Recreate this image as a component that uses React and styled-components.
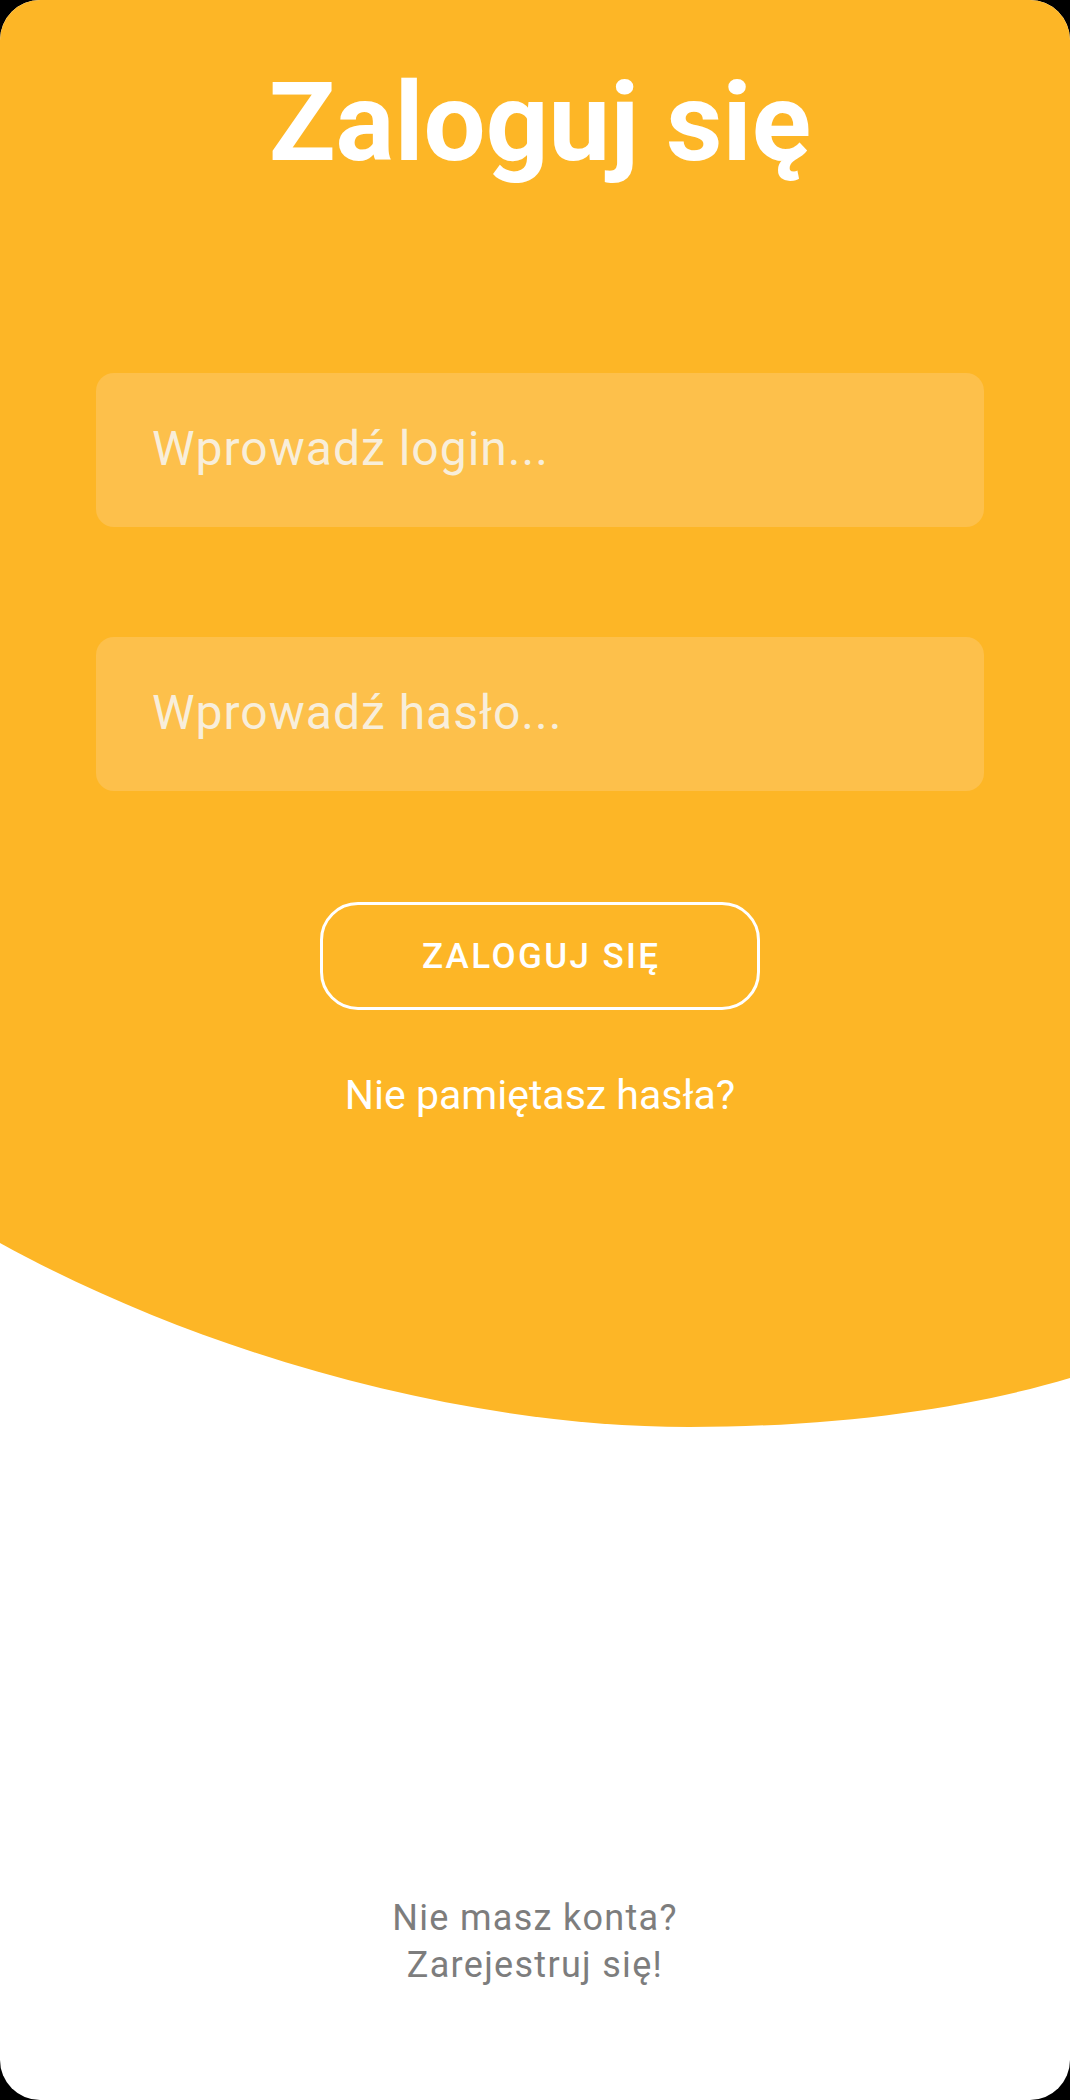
import styled, { createGlobalStyle } from "styled-components";

const GlobalStyle = createGlobalStyle`
* { box-sizing: border-box; }
html, body {
  margin: 0;
  padding: 0;
  background: #000000;
}
body {
  font-family: Roboto, "Noto Sans", "Liberation Sans", sans-serif;
}
`;

const Screen = styled.div`
width: 1070px;
height: 2100px;
background: #ffffff;
border-radius: 40px;
overflow: hidden;
display: flex;
flex-direction: column;
`;

const Header = styled.div`
background: #FDB626;
display: flex;
flex-direction: column;
align-items: center;
padding: 57px 86px 0 96px;
height: 1243px;
`;

const Title = styled.h1`
margin: 0;
font-size: 110px;
line-height: 1.2;
font-weight: 700;
color: #ffffff;
`;

const Form = styled.form`
width: 100%;
display: flex;
flex-direction: column;
align-items: center;
margin-top: 184px;
gap: 110px;
`;

const Field = styled.input`
width: 100%;
height: 154px;
border: none;
outline: none;
border-radius: 18px;
background: #FDC04B;
padding: 0 0 4px 56px;
font-family: inherit;
font-size: 48px;
letter-spacing: 1px;
color: #ffffff;
&::placeholder {
  color: #F8EEDA;
}
`;

const SubmitButton = styled.button`
width: 440px;
height: 108px;
margin-top: 1px;
padding: 0 0 0 2.4px;
border: 3px solid #ffffff;
border-radius: 38px;
background: transparent;
color: #ffffff;
font-family: inherit;
font-size: 35px;
font-weight: 500;
letter-spacing: 2.4px;
cursor: pointer;
`;

const ForgotLink = styled.a`
margin-top: 61px;
font-size: 41px;
line-height: 1.2;
color: #ffffff;
cursor: pointer;
`;

const Wave = styled.svg`
display: block;
width: 1070px;
height: 184px;
flex-shrink: 0;
`;

const Footer = styled.div`
margin-top: auto;
margin-bottom: 111px;
text-align: center;
font-size: 36px;
line-height: 47px;
letter-spacing: 1.3px;
color: #7d7d7d;
`;

const App = () => {
    return (
        <>
            <GlobalStyle />
            <Screen>
                <Header>
                    <Title>Zaloguj się</Title>
                    <Form onSubmit={(e) => e.preventDefault()}>
                        <Field type="text" placeholder="Wprowadź login..." />
                        <Field type="password" placeholder="Wprowadź hasło..." />
                        <SubmitButton type="submit">ZALOGUJ SIĘ</SubmitButton>
                    </Form>
                    <ForgotLink>Nie pamiętasz hasła?</ForgotLink>
                </Header>
                <Wave viewBox="0 0 1070 184" preserveAspectRatio="none">
                    <path
                        d="M0 0 C200 110 460 184 689 184 C850 184 980 162 1070 135 L1070 0 Z"
                        fill="#FDB626"
                    />
                </Wave>
                <Footer>
                    Nie masz konta?
                    <br />
                    Zarejestruj się!
                </Footer>
            </Screen>
        </>
    )
}

export default App
